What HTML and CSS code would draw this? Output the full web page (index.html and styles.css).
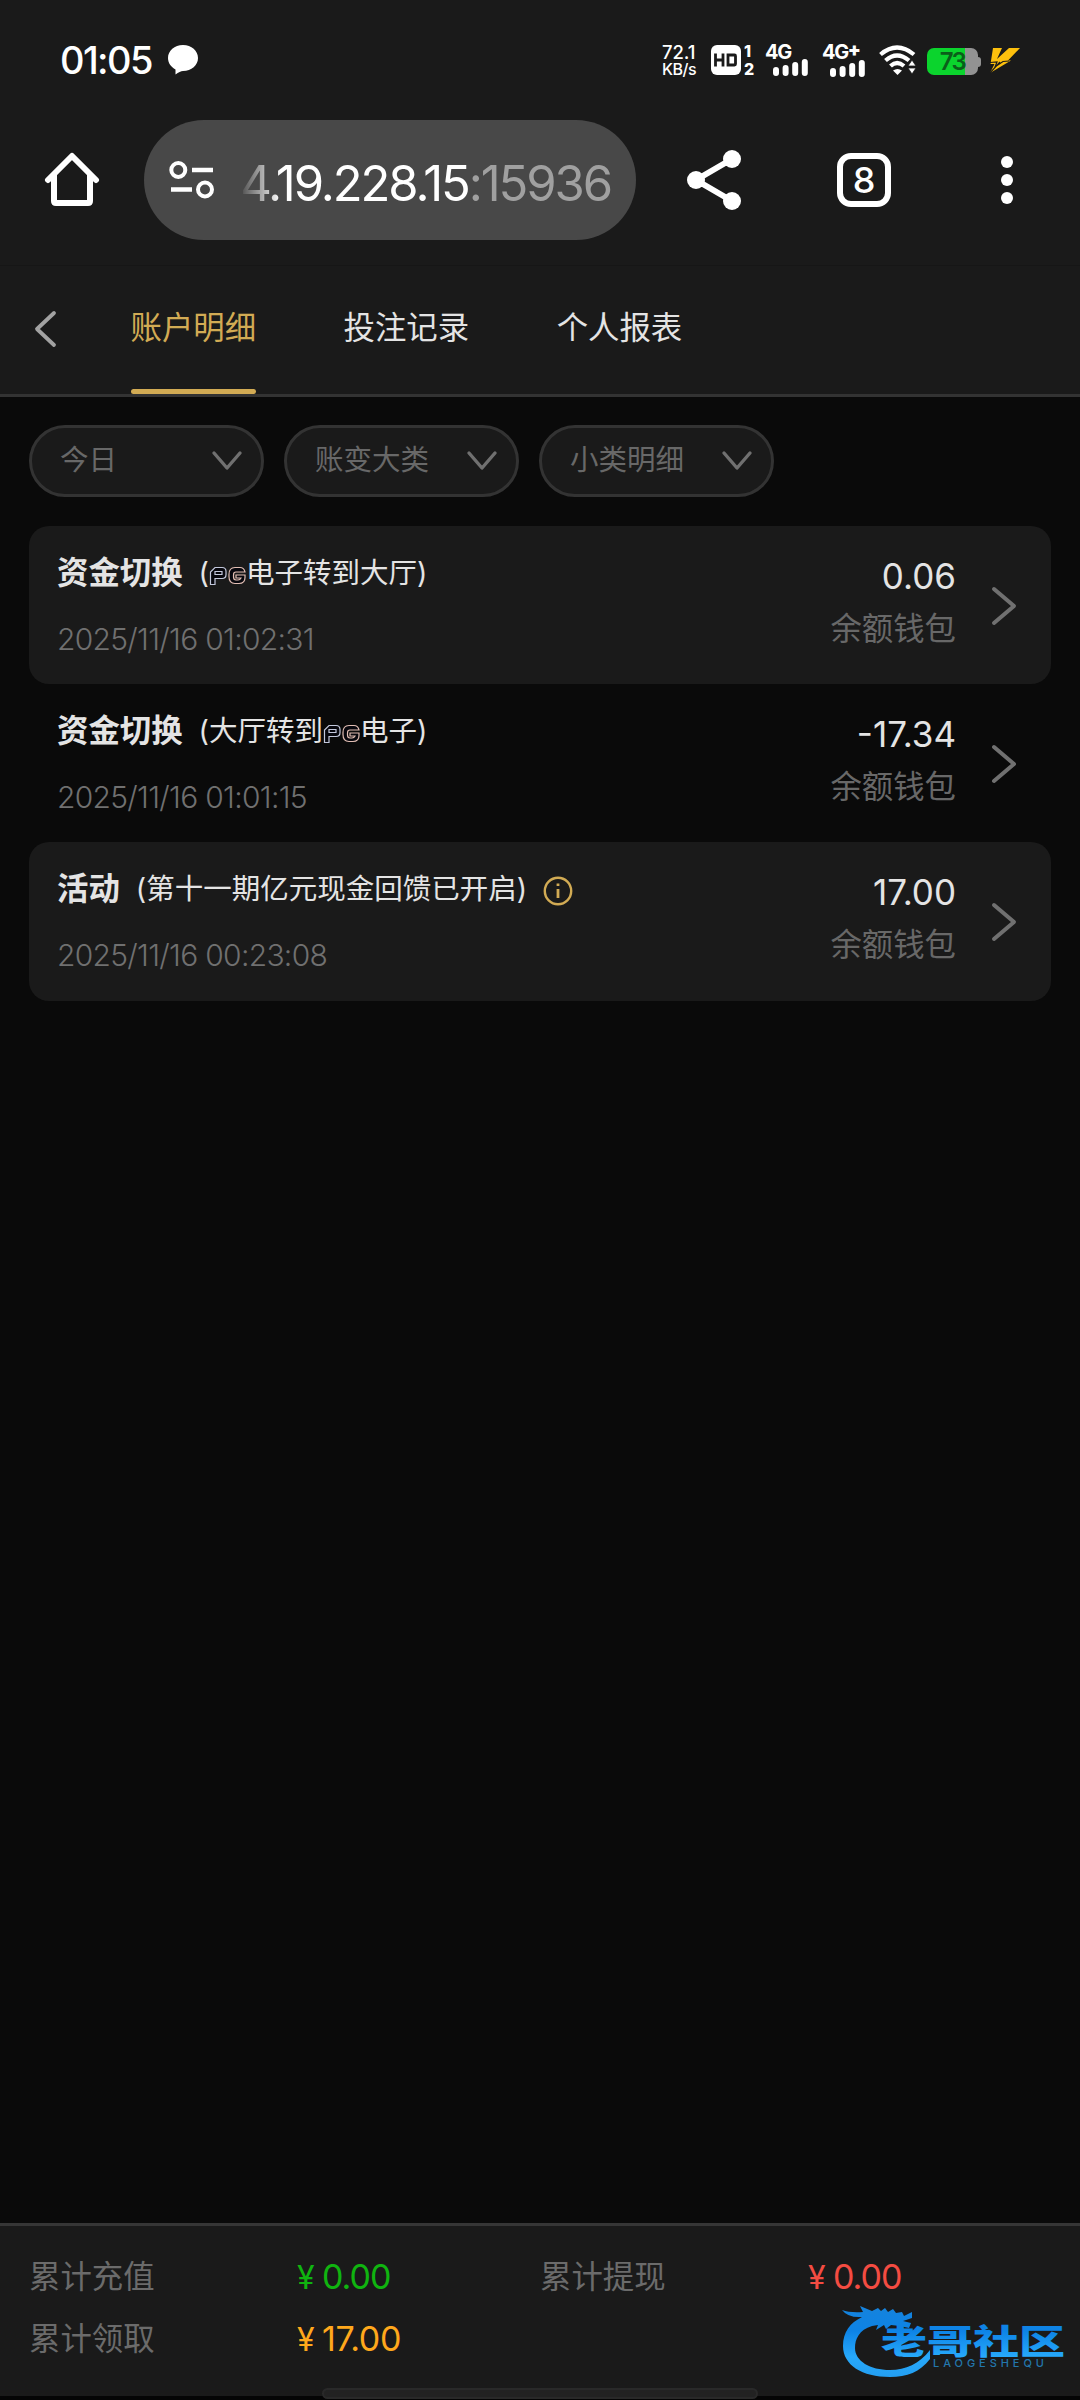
FILE: index.html
```html
<!DOCTYPE html>
<html lang="zh-CN">
<head>
<meta charset="utf-8">
<title>账户明细</title>
<link rel="stylesheet" href="styles.css">
</head>
<body>
<svg class="defs" width="0" height="0" aria-hidden="true">
  <symbol id="chev-down" viewBox="0 0 32 22"><path d="M3 3l13 15L29 3" fill="none" stroke="#707070" stroke-width="3.4" stroke-linecap="round" stroke-linejoin="round"/></symbol>
  <symbol id="chev-right" viewBox="0 0 26 40"><path d="M3 3l20 17L3 37" fill="none" stroke="#707070" stroke-width="4" stroke-linecap="round" stroke-linejoin="round"/></symbol>
  <symbol id="bars" viewBox="0 0 36 17"><path d="M3 11v3M12.6 9v5M22.2 6v8M31.8 3v11" fill="none" stroke="#fff" stroke-width="6" stroke-linecap="round"/></symbol>
  <symbol id="pg" viewBox="0 0 37 20"><path d="M1.5 18.500V6L6 1.500h7q4 0 4 4v3q0 4-4 4H6v6zM6 5.500h7v3H6z" fill="#07070d" stroke="#c3c8dc" stroke-width="1.200"/><path d="M36 6q-1-4.500-5-4.500h-5q-6 0-6 7v2q0 7 6 7h4q6 0 6-6V9h-9v3h5q-1 2-3 2h-2q-2.500 0-2.500-3V9q0-3 2.500-3h4z" fill="#07070d" stroke="#e2beb4" stroke-width="1.200"/></symbol>
</svg>

<header class="status">
  <span class="clock">01:05</span>
  <svg class="bubble" width="30" height="30" viewBox="0 0 30 30"><path d="M15 0c8.500 0 15 5.700 15 13s-6.500 13-15 13q-3 0-7.500 3.500V24.500C3 22 0 18 0 13 0 5.700 6.500 0 15 0z" fill="#fff"/></svg>
  <div class="indicators">
    <div class="speed"><span>72.1</span><span>KB/s</span></div>
    <div class="hd">
      <svg width="30" height="30" viewBox="0 0 30 30"><rect width="30" height="30" rx="6" fill="#fff"/><path d="M4.500 8.500v13M12 8.500v13M4.500 15H12M17 10h6.500q1 0 1 1v8q0 1-1 1H17z" fill="none" stroke="#1a1a1a" stroke-width="2.800"/></svg>
      <div class="sims"><span>1</span><span>2</span></div>
    </div>
    <div class="signal"><span>4G</span><svg width="36" height="17"><use href="#bars"/></svg></div>
    <div class="signal second"><span>4G<b>+</b></span><svg width="36" height="17"><use href="#bars"/></svg></div>
    <svg class="wifi" width="37" height="30" viewBox="0 0 37 30"><path d="M1.500 9.500Q18 -4.500 35 9.500M6.500 15.500Q18 5.500 30 15.500M11.500 21Q18 15 25 21" fill="none" stroke="#fff" stroke-width="4.200"/><path d="M14 25.500q4.500-3 9 0L18.500 30z" fill="#fff"/><path d="M33 15l4 6h-8zM33 29l4-6h-8z" fill="#fff" stroke="#1a1a1a" stroke-width=".8"/></svg>
    <div class="battery"><span>73</span></div>
    <svg class="bolt" width="30" height="25" viewBox="0 0 30 25"><path d="M3 0h9L7 11 19 0h11L18 12.500h3L0 25l4.500-9H.5z" fill="#fdc00d"/><path d="M0 14.500l7-.5-2 5 8-5.500 6-.5M10 14L0 25" fill="none" stroke="#1a1a1a" stroke-width="1.200"/></svg>
  </div>
</header>

<nav class="browser">
  <svg class="home" width="56" height="56" viewBox="0 0 56 56"><path d="M4 28L28 4l24 24M10 23v26q0 2 2 2h32q2 0 2-2V23" fill="none" stroke="#fff" stroke-width="6" stroke-linecap="round" stroke-linejoin="round"/></svg>
  <div class="address">
    <svg width="46" height="40" viewBox="0 0 46 40"><circle cx="9.300" cy="10" r="7" fill="none" stroke="#fff" stroke-width="4"/><circle cx="36" cy="29.500" r="7" fill="none" stroke="#fff" stroke-width="4"/><path d="M23 10h21M2 29.500h21" stroke="#fff" stroke-width="4.500"/></svg>
    <div class="url"><span>54.19.228.15</span><span class="port">:15936</span></div>
  </div>
  <svg class="share" width="56" height="60" viewBox="0 0 56 60"><path d="M46 9L10 30l36 21" fill="none" stroke="#fff" stroke-width="6"/><g fill="#fff"><circle cx="46" cy="9" r="9"/><circle cx="10" cy="30" r="9"/><circle cx="46" cy="51" r="9"/></g></svg>
  <span class="tabcount">8</span>
  <svg class="more" width="12" height="48" viewBox="0 0 12 48"><g fill="#fff"><circle cx="6" cy="6" r="6"/><circle cx="6" cy="24" r="6"/><circle cx="6" cy="42" r="6"/></g></svg>
</nav>

<nav class="tabs">
  <svg class="back" width="24" height="38" viewBox="0 0 24 38"><path d="M20 3L3 19l17 16" fill="none" stroke="#a2a2a2" stroke-width="3.800" stroke-linecap="round" stroke-linejoin="round"/></svg>
  <a class="tab active">账户明细</a>
  <a class="tab">投注记录</a>
  <a class="tab">个人报表</a>
</nav>

<main>
  <div class="filters">
    <div class="filter">今日<svg width="32" height="22"><use href="#chev-down"/></svg></div>
    <div class="filter">账变大类<svg width="32" height="22"><use href="#chev-down"/></svg></div>
    <div class="filter">小类明细<svg width="32" height="22"><use href="#chev-down"/></svg></div>
  </div>
  <div class="list">
    <article class="row">
      <div class="info">
        <div class="title"><strong>资金切换</strong><span class="note">(<svg class="pg" width="37" height="20"><use href="#pg"/></svg>电子转到大厅)</span></div>
        <time>2025/11/16 01:02:31</time>
      </div>
      <div class="sum"><span class="amount">0.06</span><span class="wallet">余额钱包</span></div>
      <svg class="go" width="26" height="40"><use href="#chev-right"/></svg>
    </article>
    <article class="row">
      <div class="info">
        <div class="title"><strong>资金切换</strong><span class="note">(大厅转到<svg class="pg" width="37" height="20"><use href="#pg"/></svg>电子)</span></div>
        <time>2025/11/16 01:01:15</time>
      </div>
      <div class="sum"><span class="amount">-17.34</span><span class="wallet">余额钱包</span></div>
      <svg class="go" width="26" height="40"><use href="#chev-right"/></svg>
    </article>
    <article class="row">
      <div class="info">
        <div class="title"><strong>活动</strong><span class="note">(第十一期亿元现金回馈已开启)</span>
          <svg class="tip" width="30" height="30" viewBox="0 0 30 30"><circle cx="15" cy="15" r="13.200" fill="none" stroke="#d2ab54" stroke-width="2.400"/><path d="M15 13v9M15 7.500v2.600" stroke="#d2ab54" stroke-width="2.800"/></svg>
        </div>
        <time>2025/11/16 00:23:08</time>
      </div>
      <div class="sum"><span class="amount">17.00</span><span class="wallet">余额钱包</span></div>
      <svg class="go" width="26" height="40"><use href="#chev-right"/></svg>
    </article>
  </div>
</main>

<footer>
  <dl>
    <dt>累计充值</dt><dd class="green"><i>¥</i>0.00</dd>
    <dt>累计提现</dt><dd class="red"><i>¥</i>0.00</dd>
    <dt>累计领取</dt><dd class="orange"><i>¥</i>17.00</dd>
  </dl>
  <div class="handle"></div>
  <svg class="brand" width="226" height="74" viewBox="0 0 226 74">
    <defs><linearGradient id="blue" x1="0" y1="0" x2="0" y2="74" gradientUnits="userSpaceOnUse"><stop offset="0" stop-color="#1683dc"/><stop offset=".35" stop-color="#0d83e6"/><stop offset=".7" stop-color="#27a9fb"/><stop offset="1" stop-color="#239df0"/></linearGradient></defs>
    <path fill="url(#blue)" d="M0 5q8 3 21 2L18 1l12 5 6-3 3 3 4-3 3 4 5-3 3 4 6-1 2 4 8-4v6l-9 3 8 2-2 5-9-2-9-1-5 4-2-4-8 5 2-5-6 1C17 25 13 34 13 43c0 13 15 22 35 22 16 0 29-6 40-20v9C78 67 65 72 48 72 20 72 1 60 1 41 1 27 8 18 20 12Q6 13 0 5z"/>
    <text class="brand-name" x="39" y="49" fill="url(#blue)" textLength="184" lengthAdjust="spacingAndGlyphs">老哥社区</text>
    <text class="brand-latin" x="91" y="62" textLength="111" lengthAdjust="spacing">LAOGESHEQU</text>
  </svg>
</footer>
</body>
</html>
```
FILE: styles.css
```css
* { box-sizing: border-box; }

body {
  margin: 0;
  width: 1080px;
  height: 2400px;
  display: flex;
  flex-direction: column;
  overflow: hidden;
  background: #0a0a0a;
  color: #e4e4e4;
  font-family: Inter, "Noto Sans CJK SC", sans-serif;
}

svg { display: block; flex: none; }
.defs { position: absolute; }

.status {
  height: 120px;
  padding: 45px 60px 0 60px;
  display: flex;
  align-items: flex-start;
  background: #1a1a1a;
  color: #fff;
}
.clock { width: 108px; font-size: 38px; line-height: 31px; font-weight: 500; letter-spacing: -1.6px; }
.indicators { margin-left: auto; display: flex; align-items: flex-start; height: 30px; }
.speed { width: 49px; display: flex; flex-direction: column; font-size: 18.500px; line-height: 15px; letter-spacing: -.1px; font-weight: 500; }
.speed span + span { font-size: 16px; line-height: 18px; letter-spacing: -.5px; }
.hd { display: flex; width: 54px; gap: 3px; }
.sims { display: flex; flex-direction: column; font-size: 16px; font-weight: 800; line-height: 13px; gap: 5px; }
.signal { width: 57px; height: 30px; display: flex; flex-direction: column; font-size: 20px; font-weight: 700; line-height: 14px; letter-spacing: -1.400px; }
.signal b { font-size: 19px; position: relative; top: -3px; }
.signal svg { margin-left: 8px; }
.wifi { margin: 0 11px 0 0; }
.battery {
  position: relative;
  width: 51px; height: 27px; margin: 3px 12px 0 0;
  border-radius: 7px;
  background: linear-gradient(90deg, #0bd42d 38px, #929292 38px);
  color: #0b5f1a;
  font-size: 24px; font-weight: 600; line-height: 28px; text-align: center; letter-spacing: -1.500px;
}
.battery::after { content: ""; position: absolute; left: 51px; top: 9px; width: 3px; height: 10px; border-radius: 0 3px 3px 0; background: #929292; }
.bolt { margin-top: 3px; }

.browser {
  height: 145px;
  display: flex;
  align-items: center;
  padding: 0 66px 25px 44px;
  background: #1a1a1a;
}
.address {
  width: 492px; height: 120px; margin: 0 50px 0 44px; padding-left: 25px;
  border-radius: 60px;
  background: #484848;
  display: flex; align-items: center;
}
.url {
  width: 372px; margin: 7px 0 0 24px;
  display: flex; justify-content: flex-end;
  overflow: hidden;
  font-size: 49px; line-height: 60px; letter-spacing: -2.100px; color: #fff;
  -webkit-mask-image: linear-gradient(90deg, transparent, #000 42px);
  mask-image: linear-gradient(90deg, transparent, #000 42px);
}
.port { color: #a0a0a0; }
.tabcount {
  width: 54px; height: 54px; margin: 0 110px 0 95px;
  border: 6px solid #fff; border-radius: 14px;
  color: #fff; font-size: 36px; font-weight: 500; line-height: 42px; text-align: center;
}

.tabs {
  height: 132px;
  display: flex;
  align-items: stretch;
  padding-left: 34px;
  gap: 87.500px;
  background: #1a1a1a;
  border-top: 1px solid #161616;
  border-bottom: 3px solid #333;
}
.back { margin: 44px -15px 0 0; }
.tab { position: relative; font-size: 31.400px; line-height: 124px; white-space: nowrap; }
.tab.active { color: #d2ab54; }
.tab.active::after { content: ""; position: absolute; left: 0; right: 0; bottom: 0; height: 5px; border-radius: 3px; background: #d2ab54; }

main { flex: 1; padding: 28px 29px 0; }
.filters { display: flex; gap: 20px; }
.filter {
  width: 235px; height: 72px; padding: 0 18px 2px 28px;
  display: flex; align-items: center; justify-content: space-between;
  border: 3px solid #333; border-radius: 36px;
  background: #1a1a1a; color: #686868; font-size: 28.500px; line-height: 40px;
}
.filter svg { margin-top: 2px; }
.list { margin-top: 29px; }
.row { height: 158.200px; display: flex; padding: 0 34px 0 28px; border-radius: 20px; }
.row:nth-child(odd) { background: #1a1a1a; }
.info { flex: 1; padding-top: 27px; }
.title { display: flex; align-items: center; height: 40px; }
.title strong { font-size: 31.400px; line-height: 40px; font-weight: 700; }
.note { display: flex; align-items: center; margin-left: 16px; font-size: 28.500px; line-height: 40px; }
.pg { margin-top: 5px; }
.tip { margin: 3px 0 0 16px; }
time { display: block; margin-top: 27px; font-size: 30px; line-height: 38px; font-weight: 300; color: #707070; letter-spacing: -.7px; white-space: nowrap; }
.sum { display: flex; flex-direction: column; align-items: flex-end; padding-top: 30px; }
.amount { font-size: 35px; line-height: 40px; }
.wallet { font-size: 31.400px; line-height: 40px; margin-top: 13px; color: #686868; }
.go { margin: 60px 0 0 35px; }

footer {
  position: relative;
  height: 177px;
  border-top: 3px solid #363636;
  border-bottom: 4px solid #050505;
  background: #1a1a1a;
}
dl { margin: 0; padding: 20px 0 0 29px; display: grid; grid-template-columns: 268px 243px 268px 1fr; grid-auto-rows: 62px; }
dt, dd { margin: 0; line-height: 62px; }
dt { font-size: 31.400px; color: #6b6b6b; }
dd { font-size: 34px; letter-spacing: -1px; }
dd i { font-style: normal; display: inline-block; width: 25px; font-size: 32px; }
.orange { letter-spacing: -.3px; }
.green { color: #10b410; }
.red { color: #f44c42; }
.orange { color: #ffa81c; }
.handle { position: absolute; left: 322px; bottom: -3px; width: 436px; height: 11px; border-radius: 6px; background: #222; border: 2px solid #292929; }
.brand { position: absolute; left: 842px; top: 79px; }
.brand-name { font: 900 34px "Noto Sans CJK SC", sans-serif; }
.brand-latin { font: 500 11px Inter, sans-serif; fill: #2377ad; }
```
